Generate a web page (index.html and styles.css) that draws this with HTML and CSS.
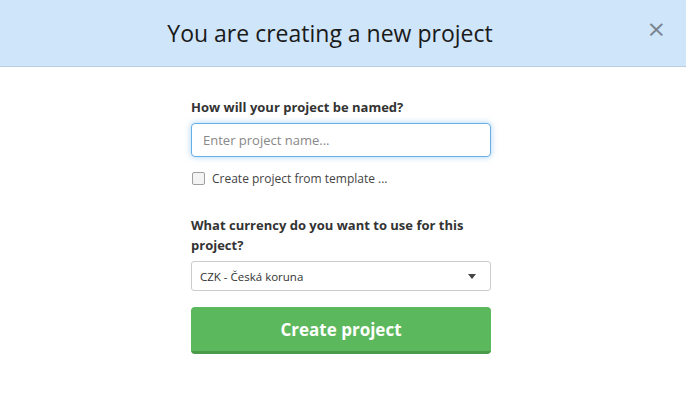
FILE: index.html
```html
<!DOCTYPE html>
<html lang="en">
<head>
  <meta charset="UTF-8">
  <title>New project</title>
  <link rel="stylesheet" href="styles.css">
</head>
<body>

<div class="modal">
  <div class="modal-header">
    <h2>You are creating a new project</h2>
    <span class="close">&times;</span>
  </div>

  <div class="modal-body">
    <label class="field-label" for="name">How will your project be named?</label>
    <input id="name" class="text-input" type="text" placeholder="Enter project name...">

    <label class="check">
      <span class="check-box"></span>
      Create project from template ...
    </label>

    <label class="field-label">What currency do you want to use for this project?</label>
    <div class="select">
      <span>CZK - Česká koruna</span>
      <span class="caret"></span>
    </div>

    <button class="btn-create">Create project</button>
  </div>
</div>

</body>
</html>
```

FILE: styles.css
```css
body {
  margin: 0;
  font-family: "Open Sans", "Noto Sans", sans-serif;
  color: #333;
  background: #fff;
}

.modal-header {
  position: relative;
  height: 66px;
  background-color: #cfe5f9;
  border-bottom: 1px solid #b8cfe3;
  display: flex;
  align-items: center;
  justify-content: center;
  padding-right: 26px;
}

.modal-header h2 {
  margin: 0;
  font-size: 23px;
  font-weight: 400;
  color: #1a1a1a;
}

.close {
  position: absolute;
  right: 21px;
  top: 14px;
  font-size: 30px;
  line-height: 30px;
  color: #7b8590;
}

.modal-body {
  width: 300px;
  margin-left: calc(50% - 152px);
  padding-top: 30px;
  display: flex;
  flex-direction: column;
}

.field-label {
  font-size: 13px;
  font-weight: 700;
  line-height: 20px;
  color: #333;
}

.text-input {
  margin-top: 6px;
  height: 34px;
  box-sizing: border-box;
  border: 1px solid #66afe9;
  border-radius: 4px;
  box-shadow: 0 0 6px rgba(102, 175, 233, 0.55);
  padding: 0 11px;
  font-family: inherit;
  font-size: 13px;
  outline: none;
}

.text-input::placeholder {
  color: #888;
}

.check {
  margin-top: 13px;
  margin-bottom: 28px;
  display: flex;
  align-items: center;
  gap: 7px;
  font-size: 12px;
  color: #444;
}

.check-box {
  width: 11px;
  height: 11px;
  border: 1px solid #a0a0a0;
  border-radius: 2px;
  background: #f4f4f4;
  margin-left: 1px;
}

.select {
  margin-top: 6px;
  height: 30px;
  box-sizing: border-box;
  border: 1px solid #ccc;
  border-radius: 3px;
  display: flex;
  align-items: center;
  justify-content: space-between;
  padding: 0 14px 0 8px;
  font-size: 11.5px;
  color: #333;
}

.caret {
  width: 0;
  height: 0;
  border-left: 4px solid transparent;
  border-right: 4px solid transparent;
  border-top: 5px solid #444;
}

.btn-create {
  margin-top: 16px;
  height: 47px;
  border: none;
  border-bottom: 3px solid #4a9a4a;
  border-radius: 4px;
  background-color: #5cb85c;
  color: #fff;
  font-family: inherit;
  font-size: 17px;
  font-weight: 700;
}
```
